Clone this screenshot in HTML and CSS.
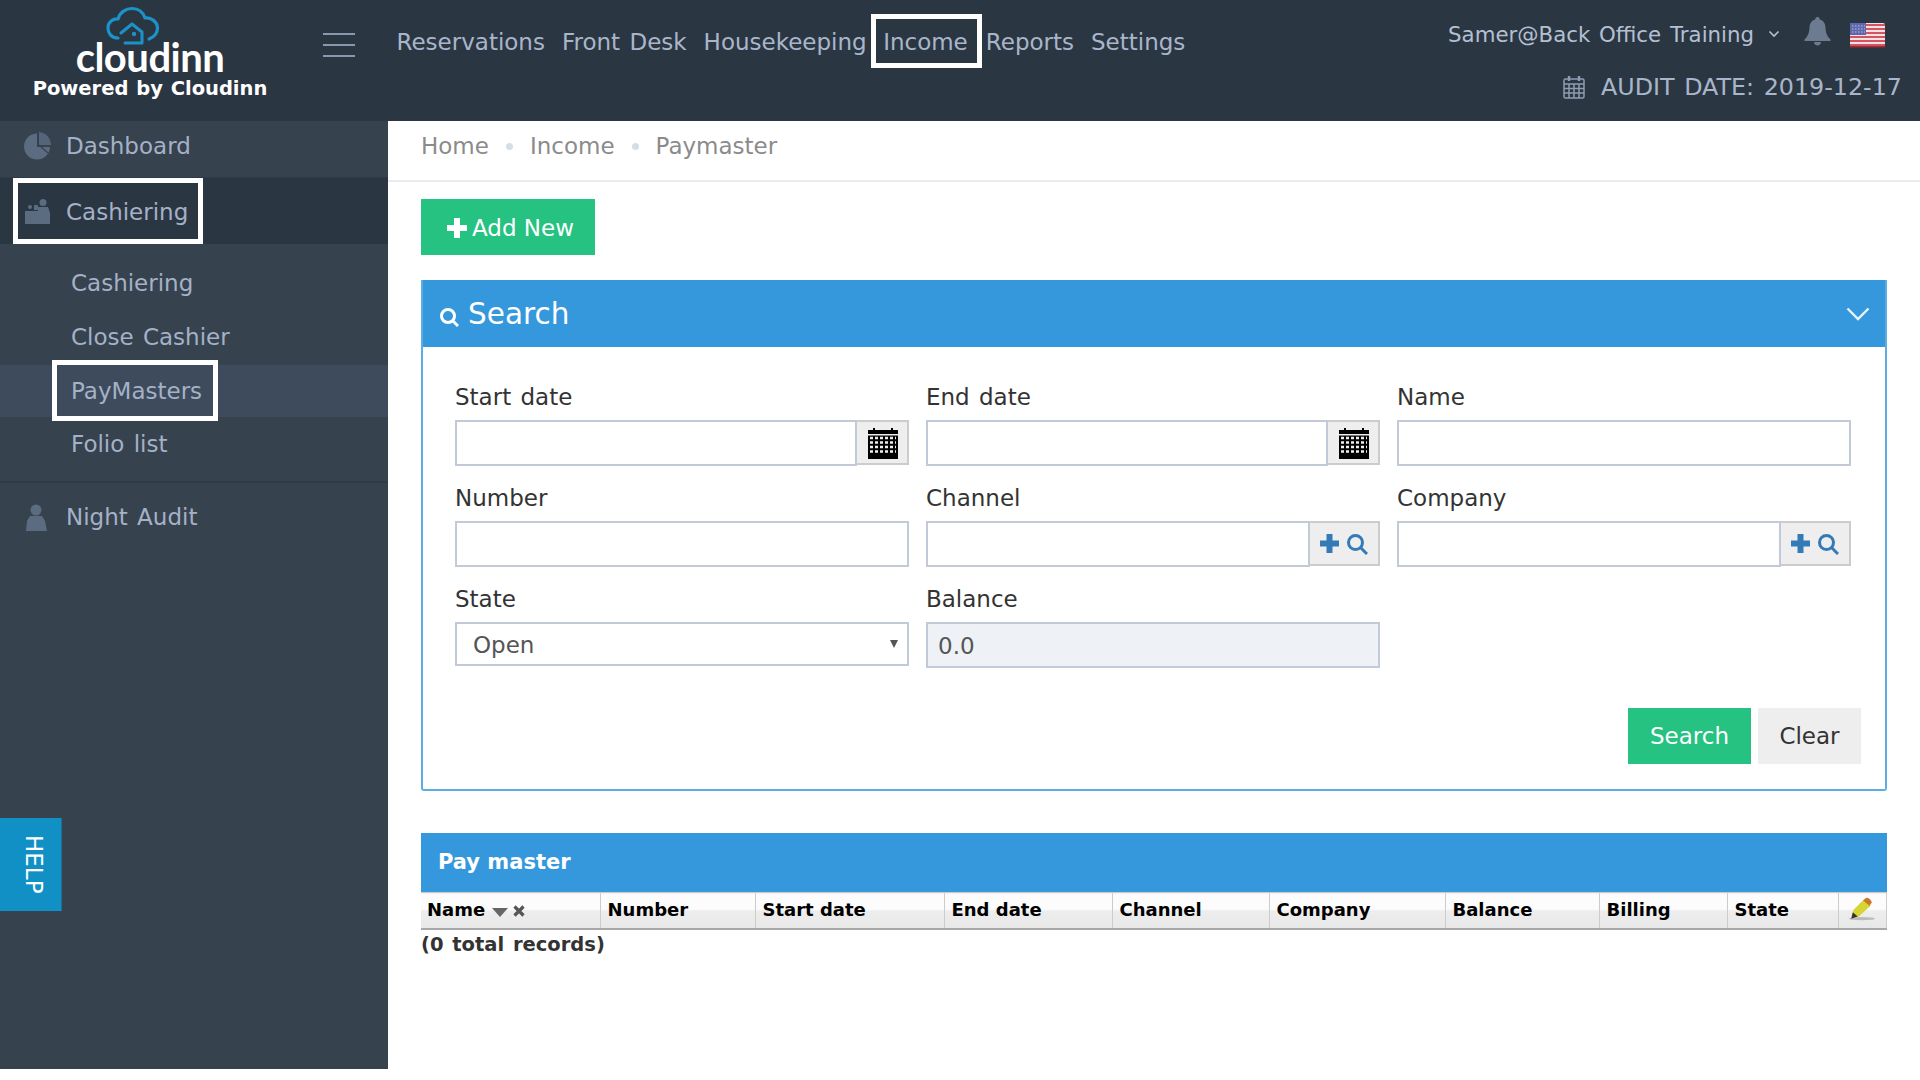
FILE: index.html
```html
<!DOCTYPE html>
<html lang="en">
<head>
<meta charset="utf-8">
<title>Paymaster</title>
<link rel="stylesheet" href="styles.css">
</head>
<body>
<header class="topbar">
  <div class="brand">
    <svg class="cloud" width="56" height="40" viewBox="0 0 56 40" fill="none" stroke="#1b93c9" stroke-linecap="round" stroke-linejoin="round">
      <path d="M13 32C6 32 3 27 3 22C3 16 8 12.500 13 13C15 6 21 2.500 27 2.500C33 2.500 38 6 40 12C46 11 52.500 16 52.500 22C52.500 27 49 31 44 33" stroke-width="3.200"/>
      <path d="M16 27L27 18L37 26V37H20" stroke-width="3"/>
      <circle cx="29" cy="28" r="2.200" fill="#1b93c9" stroke="none"/>
    </svg>
    <div class="wordmark">cloudinn</div>
    <div class="powered">Powered by Cloudinn</div>
  </div>
  <div class="burger"><span></span><span></span><span></span></div>
  <nav class="topnav">
    <a class="topnav-item">Reservations</a>
    <a class="topnav-item">Front Desk</a>
    <a class="topnav-item">Housekeeping</a>
    <a class="topnav-item topnav-current">Income</a>
    <a class="topnav-item">Reports</a>
    <a class="topnav-item">Settings</a>
  </nav>
  <div class="topright">
    <div class="userline">
      <span class="username">Samer@Back Office Training</span>
      <svg class="caret" width="12" height="8" viewBox="0 0 12 8" fill="none"><path d="M1.500 1.500L6 6L10.500 1.500" stroke="#b4c0d2" stroke-width="1.600"/></svg>
      <svg class="bell" width="27" height="29" viewBox="0 0 27 29"><path d="M13.500 0C15 0 15.800 1 15.700 2.400C19.500 3.300 21.300 6.500 21.500 10.500C21.800 16 22.800 19 26.500 22.500V24H.5V22.500C4.200 19 5.200 16 5.500 10.500C5.700 6.500 7.500 3.300 11.300 2.400C11.200 1 12 0 13.500 0Z" fill="#6d7b91"/><path d="M10 25H17C16.700 27.500 15.300 28.500 13.500 28.500C11.700 28.500 10.300 27.500 10 25Z" fill="#6d7b91"/></svg>
      <svg class="flag" width="35" height="26" viewBox="0 0 35 26">
        <rect y="1" width="35" height="24" rx="2" fill="#e8e4e6"/>
        <path d="M0 3H35M0 7H35M0 11H35M0 15H35M0 19H35M0 23H35" stroke="#d9505f" stroke-width="2"/>
        <rect y="1" width="16" height="12" fill="#5f68ab"/>
        <path d="M2 4H15M2 7H15M2 10H15" stroke="#b9bedd" stroke-width="1.200" stroke-dasharray="1.500 1.500"/>
        <rect y="24" width="35" height="1.500" fill="#9e2a36"/>
      </svg>
    </div>
    <div class="auditline">
      <svg width="22" height="24" viewBox="0 0 22 24" fill="none" stroke="#8f9db1" stroke-width="1.500">
        <rect x="1" y="4" width="20" height="19" rx="1.500"/>
        <path d="M1 9H21M1 13.500H21M1 18H21M6 9V23M11 9V23M16 9V23"/>
        <path d="M6 1V6M16 1V6" stroke-width="2.400"/>
      </svg>
      <span>AUDIT DATE: 2019-12-17</span>
    </div>
  </div>
</header>

<div class="shell">
  <aside class="sidebar">
    <a class="side-main side-dash">
      <svg class="icon-dash" width="28" height="28" viewBox="0 0 28 28"><path d="M13 1.500A13 13 0 1 0 26 15H13Z" fill="#5b6b80"/><path d="M15 0A13 13 0 0 1 27 13H15Z" fill="#55647a"/><path d="M15 13L24 21" stroke="#37424f" stroke-width="1.200"/></svg>
      <span>Dashboard</span>
    </a>
    <div class="side-open">
      <a class="side-box">
        <svg class="icon-cash" width="26" height="26" viewBox="0 0 26 26" fill="#5b6b80"><circle cx="18" cy="3.500" r="3.500"/><path d="M13 8H23L25 14V25H13Z"/><rect x="0" y="12" width="15" height="13"/><circle cx="5" cy="8" r="2"/><rect x="9" y="6" width="4" height="5"/></svg>
        <span>Cashiering</span>
      </a>
    </div>
    <ul class="sublist">
      <li class="subitem"><a class="sublink">Cashiering</a></li>
      <li class="subitem"><a class="sublink">Close Cashier</a></li>
      <li class="subitem subitem-active"><a class="sublink sublink-current">PayMasters</a></li>
      <li class="subitem"><a class="sublink">Folio list</a></li>
    </ul>
    <a class="side-main side-night">
      <svg class="icon-night" width="22" height="27" viewBox="0 0 22 27" fill="#5b6b80"><circle cx="11" cy="6" r="5.500"/><path d="M5 12H17L20 17L22 27H1L2 17Z"/></svg>
      <span>Night Audit</span>
    </a>
    <a class="help-tab">HELP</a>
  </aside>

  <main class="content">
    <div class="crumbs">
      <span>Home</span><i class="crumb-dot"></i><span>Income</span><i class="crumb-dot"></i><span>Paymaster</span>
    </div>
    <div class="content-body">
      <button class="add-btn" type="button">
        <svg width="20" height="20" viewBox="0 0 20 20" fill="#fff"><path d="M7 0H13V7H20V13H13V20H7V13H0V7H7Z"/></svg>
        <span>Add New</span>
      </button>

      <section class="panel">
        <div class="panel-head">
          <div class="panel-title">
            <svg width="20" height="20" viewBox="0 0 20 20" fill="none" stroke="#fff" stroke-width="3"><circle cx="9" cy="9" r="6.500"/><path d="M13.500 13.500L19 19"/></svg>
            <span>Search</span>
          </div>
          <svg width="24" height="14" viewBox="0 0 24 14" fill="none"><path d="M1.500 1.500L12 12L22.500 1.500" stroke="#eaf4fb" stroke-width="2.400"/></svg>
        </div>
        <div class="panel-body">
          <div class="fields">
            <div class="field">
              <label class="field-label">Start date</label>
              <div class="input-row"><input class="text-input" type="text"><span class="addon addon-cal">
                <svg class="cal" width="30" height="32" viewBox="0 0 30 32"><path d="M0 3H5V1H7V3H23V1H25V3H30V32H0Z" fill="#000"/><rect y="7" width="30" height="1.500" fill="#eee"/><path d="M2 11H28M2 15.500H28M2 20H28M2 24.500H28" stroke="#eee" stroke-width="2.400" stroke-dasharray="3 2"/></svg>
              </span></div>
            </div>
            <div class="field">
              <label class="field-label">End date</label>
              <div class="input-row"><input class="text-input" type="text"><span class="addon addon-cal">
                <svg class="cal" width="30" height="32" viewBox="0 0 30 32"><path d="M0 3H5V1H7V3H23V1H25V3H30V32H0Z" fill="#000"/><rect y="7" width="30" height="1.500" fill="#eee"/><path d="M2 11H28M2 15.500H28M2 20H28M2 24.500H28" stroke="#eee" stroke-width="2.400" stroke-dasharray="3 2"/></svg>
              </span></div>
            </div>
            <div class="field">
              <label class="field-label">Name</label>
              <div class="input-row"><input class="text-input" type="text"></div>
            </div>
            <div class="field">
              <label class="field-label">Number</label>
              <div class="input-row"><input class="text-input" type="text"></div>
            </div>
            <div class="field">
              <label class="field-label">Channel</label>
              <div class="input-row"><input class="text-input" type="text"><span class="addon addon-look">
                <svg width="19" height="19" viewBox="0 0 19 19" fill="#337ab7"><path d="M6.500 0H12.500V6.500H19V12.500H12.500V19H6.500V12.500H0V6.500H6.500Z"/></svg>
                <svg width="22" height="22" viewBox="0 0 22 22" fill="none" stroke="#337ab7" stroke-width="3"><circle cx="9.500" cy="9.500" r="7"/><path d="M14.500 14.500L21 21"/></svg>
              </span></div>
            </div>
            <div class="field">
              <label class="field-label">Company</label>
              <div class="input-row"><input class="text-input" type="text"><span class="addon addon-look">
                <svg width="19" height="19" viewBox="0 0 19 19" fill="#337ab7"><path d="M6.500 0H12.500V6.500H19V12.500H12.500V19H6.500V12.500H0V6.500H6.500Z"/></svg>
                <svg width="22" height="22" viewBox="0 0 22 22" fill="none" stroke="#337ab7" stroke-width="3"><circle cx="9.500" cy="9.500" r="7"/><path d="M14.500 14.500L21 21"/></svg>
              </span></div>
            </div>
            <div class="field">
              <label class="field-label">State</label>
              <div class="select-wrap"><select class="select-input"><option>Open</option></select></div>
            </div>
            <div class="field">
              <label class="field-label">Balance</label>
              <input class="text-input balance-input" type="text" value="0.0" disabled>
            </div>
          </div>
          <div class="panel-actions">
            <button class="btn-search" type="button">Search</button>
            <button class="btn-clear" type="button">Clear</button>
          </div>
        </div>
      </section>

      <section class="results">
        <div class="results-head">Pay master</div>
        <table class="grid">
          <colgroup>
            <col class="c1"><col class="c2"><col class="c3"><col class="c4"><col class="c5"><col class="c6"><col class="c7"><col class="c8"><col class="c9"><col class="c10">
          </colgroup>
          <thead>
            <tr>
              <th>Name <svg class="sort" width="16" height="9" viewBox="0 0 16 9"><path d="M0 0H16L8 9Z" fill="#666"/></svg> <svg class="clear-x" width="12" height="12" viewBox="0 0 12 12"><path d="M1.500 1.500L10.500 10.500M10.500 1.500L1.500 10.500" stroke="#555" stroke-width="3.200"/></svg></th>
              <th>Number</th>
              <th>Start date</th>
              <th>End date</th>
              <th>Channel</th>
              <th>Company</th>
              <th>Balance</th>
              <th>Billing</th>
              <th>State</th>
              <th class="th-edit">
                <svg width="28" height="24" viewBox="0 0 26 22"><ellipse cx="13" cy="20" rx="12" ry="1.500" fill="#bbb"/><path d="M3 19L5 12L15 2L21 8L10 18Z" fill="#d6d534"/><path d="M14 3L17 0.500C19 0 22 3 22 5L20 8Z" fill="#c9782a"/><path d="M3 20L4.500 14L9 18Z" fill="#333"/></svg>
              </th>
            </tr>
          </thead>
        </table>
        <div class="total">(0 total records)</div>
      </section>
    </div>
  </main>
</div>
</body>
</html>
```

FILE: styles.css
```css
* { box-sizing: border-box; }
html, body { margin: 0; padding: 0; }
body {
  height: 1080px;
  overflow: hidden;
  background: #fff;
  font-family: "DejaVu Sans", Verdana, sans-serif;
  font-size: 23px;
  word-spacing: 2px;
  color: #333;
}
a { color: inherit; text-decoration: none; }

.topbar {
  display: flex;
  height: 121px;
  background: #2b3643;
  color: #a9b6ca;
}
.brand {
  width: 300px;
  display: flex;
  flex-direction: column;
  align-items: center;
  flex: none;
}
.cloud { margin: 6px 0 0 -34px; display: block; flex: none; }
.wordmark {
  font-family: "Lato", sans-serif;
  font-weight: 700;
  font-size: 40px;
  line-height: 34px;
  color: #fff;
  margin-top: -6px;
  letter-spacing: -.5px;
}
.powered {
  font-weight: 700;
  font-size: 19.500px;
  line-height: 24px;
  color: #fff;
  margin-top: 3px;
  word-spacing: 1px;
}
.burger {
  width: 32px;
  margin: 33px 0 0 23px;
  height: 24px;
  display: flex;
  flex-direction: column;
  justify-content: space-between;
  flex: none;
}
.burger span { display: block; height: 2px; background: #8a98ad; }
.topnav {
  display: flex;
  align-items: flex-start;
  margin: 19px 0 0 33px;
}
.topnav-item {
  height: 44px;
  line-height: 46px;
  padding: 0 8.500px;
  white-space: nowrap;
}
.topnav-current {
  outline: 5px solid #fff;
  margin: 0 0 0 1px;
  padding: 0 9.500px 0 7px;
}
.topright {
  margin-left: auto;
  padding-right: 18px;
  display: flex;
  flex-direction: column;
  align-items: flex-end;
}
.userline {
  display: flex;
  align-items: center;
  height: 26px;
  margin-top: 21px;
  padding-right: 17px;
  color: #b4c0d2;
  font-size: 21.300px;
}
.caret { margin-left: 14px; }
.bell { margin: -6px 0 0 24px; }
.flag { margin: 2px 0 0 19px; }
.auditline {
  display: flex;
  align-items: center;
  gap: 16px;
  margin-top: 27px;
  height: 26px;
  font-size: 23.800px;
}

.shell { display: flex; height: 948px; }
.sidebar {
  position: relative;
  width: 388px;
  flex: none;
  background: #37424f;
  color: #a4b1c6;
}
.side-main {
  display: flex;
  align-items: center;
  height: 57px;
  padding-left: 24px;
}
.side-dash { border-bottom: 1px solid #2f3a47; padding-bottom: 6px; }
.icon-dash { margin-right: 14px; flex: none; }
.icon-cash { margin-right: 15px; flex: none; }
.icon-night { margin: 0 19px 0 1px; flex: none; }
.side-open {
  height: 66px;
  padding: 5px 0 5px 18px;
  background: #2b3643;
}
.side-box {
  display: inline-flex;
  align-items: center;
  height: 56px;
  width: 180px;
  padding: 2px 0 0 7px;
  outline: 5px solid #fff;
}
.sublist {
  list-style: none;
  margin: 0;
  padding: 13px 0 0;
  height: 239px;
  border-bottom: 2px solid #303b48;
}
.subitem { height: 53.500px; line-height: 53px; padding-left: 57px; }
.subitem-active { height: 52px; margin-bottom: 1px; background: #3e4b5c; }
.sublink { display: block; padding-left: 14px; }
.sublink-current {
  width: 156px;
  height: 51px;
  margin-top: 1px;
  line-height: 53px;
  outline: 5px solid #fff;
}
.side-night { height: 70px; padding-bottom: 2px; }
.help-tab {
  position: absolute;
  left: 0;
  top: 697px;
  width: 62px;
  height: 93px;
  background: #1090c5;
  border-right: 1px solid #1c6f99;
  color: #fff;
  writing-mode: vertical-rl;
  text-align: center;
  line-height: 54px;
  font-size: 23px;
}

.content { flex: 1; min-width: 0; }
.crumbs {
  display: flex;
  align-items: center;
  height: 61px;
  padding: 0 0 9px 33px;
  border-bottom: 2px solid #e7ecf1;
  color: #8b8b8b;
}
.crumb-dot {
  width: 7px;
  height: 7px;
  border-radius: 50%;
  background: #d7dde4;
  margin: 0 17px;
}
.content-body { padding: 17px 33px 0 33px; }
.add-btn {
  display: flex;
  align-items: center;
  gap: 5px;
  width: 174px;
  height: 56px;
  padding: 1px 0 0 26px;
  border: 0;
  background: #26c281;
  color: #fff;
  font: inherit;
}
.panel {
  margin-top: 25px;
  border: 2px solid #5dade2;
  border-top: 0;
  border-radius: 0 0 3px 3px;
  height: 511px;
}
.panel-head {
  display: flex;
  align-items: center;
  justify-content: space-between;
  height: 67px;
  padding: 0 15px 0 16px;
  background: #3598dc;
  color: #fff;
}
.panel-title {
  display: flex;
  align-items: center;
  gap: 9px;
  font-size: 29.500px;
}
.panel-title svg { margin-top: 6px; }
.panel-body { padding: 35px 24px 0 32px; }
.fields {
  display: grid;
  grid-template-columns: repeat(3, 454px);
  column-gap: 17px;
  grid-auto-rows: 101px;
}
.field { display: flex; flex-direction: column; align-items: stretch; }
.field-label {
  height: 38px;
  line-height: 30px;
  color: #333;
}
.input-row { display: flex; height: 46px; }
.text-input {
  flex: 1;
  min-width: 0;
  width: 100%;
  height: 46px;
  border: 2px solid #c2cad8;
  background: #fff;
  padding: 1px 10px 0;
  font: inherit;
  border-radius: 0;
  outline: none;
}
.addon {
  display: flex;
  align-items: center;
  justify-content: center;
  height: 45px;
  flex: none;
  background: #eee;
  border: 2px solid #ccc;
  border-left: 0;
}
.addon-cal { width: 52px; padding-left: 1px; }
.addon-look { width: 70px; gap: 7px; }
.select-wrap { position: relative; height: 44px; }
.select-wrap::after {
  content: "";
  position: absolute;
  right: 11px;
  top: 18px;
  border-style: solid;
  border-width: 8px 4px 0;
  border-color: #555 transparent transparent;
  pointer-events: none;
}
.select-input {
  appearance: none;
  -webkit-appearance: none;
  display: block;
  width: 100%;
  height: 44px;
  border: 2px solid #c2cad8;
  background: #fff;
  padding: 1px 0 0 16px;
  font: inherit;
  color: #555;
  border-radius: 0;
  outline: none;
}
.balance-input {
  flex: none;
  background: #eef1f5;
  color: #555;
  opacity: 1;
}
.panel-actions {
  display: flex;
  justify-content: flex-end;
  gap: 7px;
  margin-top: 23px;
}
.btn-search, .btn-clear {
  height: 56px;
  padding-top: 1px;
  border: 0;
  font: inherit;
}
.btn-search { width: 123px; background: #26c281; color: #fff; }
.btn-clear { width: 103px; background: #eee; color: #333; }

.results { margin-top: 42px; }
.results-head {
  height: 59px;
  line-height: 58px;
  padding-left: 17px;
  background: #3598dc;
  color: #fff;
  font-weight: 700;
  font-size: 21px;
  word-spacing: 0;
}
.grid {
  width: 1465px;
  table-layout: fixed;
  border-collapse: collapse;
  font-size: 18px;
  word-spacing: 0;
}
.c1 { width: 179px; } .c2 { width: 155px; } .c3 { width: 189px; } .c4 { width: 168px; }
.c5 { width: 157px; } .c6 { width: 176px; } .c7 { width: 154px; } .c8 { width: 128px; }
.c9 { width: 111px; } .c10 { width: 48px; }
.grid th {
  height: 36px;
  padding: 0 0 2px 7px;
  text-align: left;
  color: #000;
  font-weight: 700;
  white-space: nowrap;
  background: linear-gradient(#fcfcfc 0, #fcfcfc 45%, #ededed 50%, #e8e8e8 100%);
  border-top: 1px solid #ccc;
  border-right: 1px solid #ccc;
  border-bottom: 2px solid #a8a8a8;
}
.grid th:first-child { padding-left: 6px; }
.sort { margin-left: 1px; vertical-align: -1px; }
.clear-x { margin-left: -2px; vertical-align: -1px; }
.th-edit svg { display: block; margin: 0 0 0 2px; }
.total {
  font-weight: 700;
  font-size: 19.500px;
  line-height: 30px;
  color: #333;
}
```
